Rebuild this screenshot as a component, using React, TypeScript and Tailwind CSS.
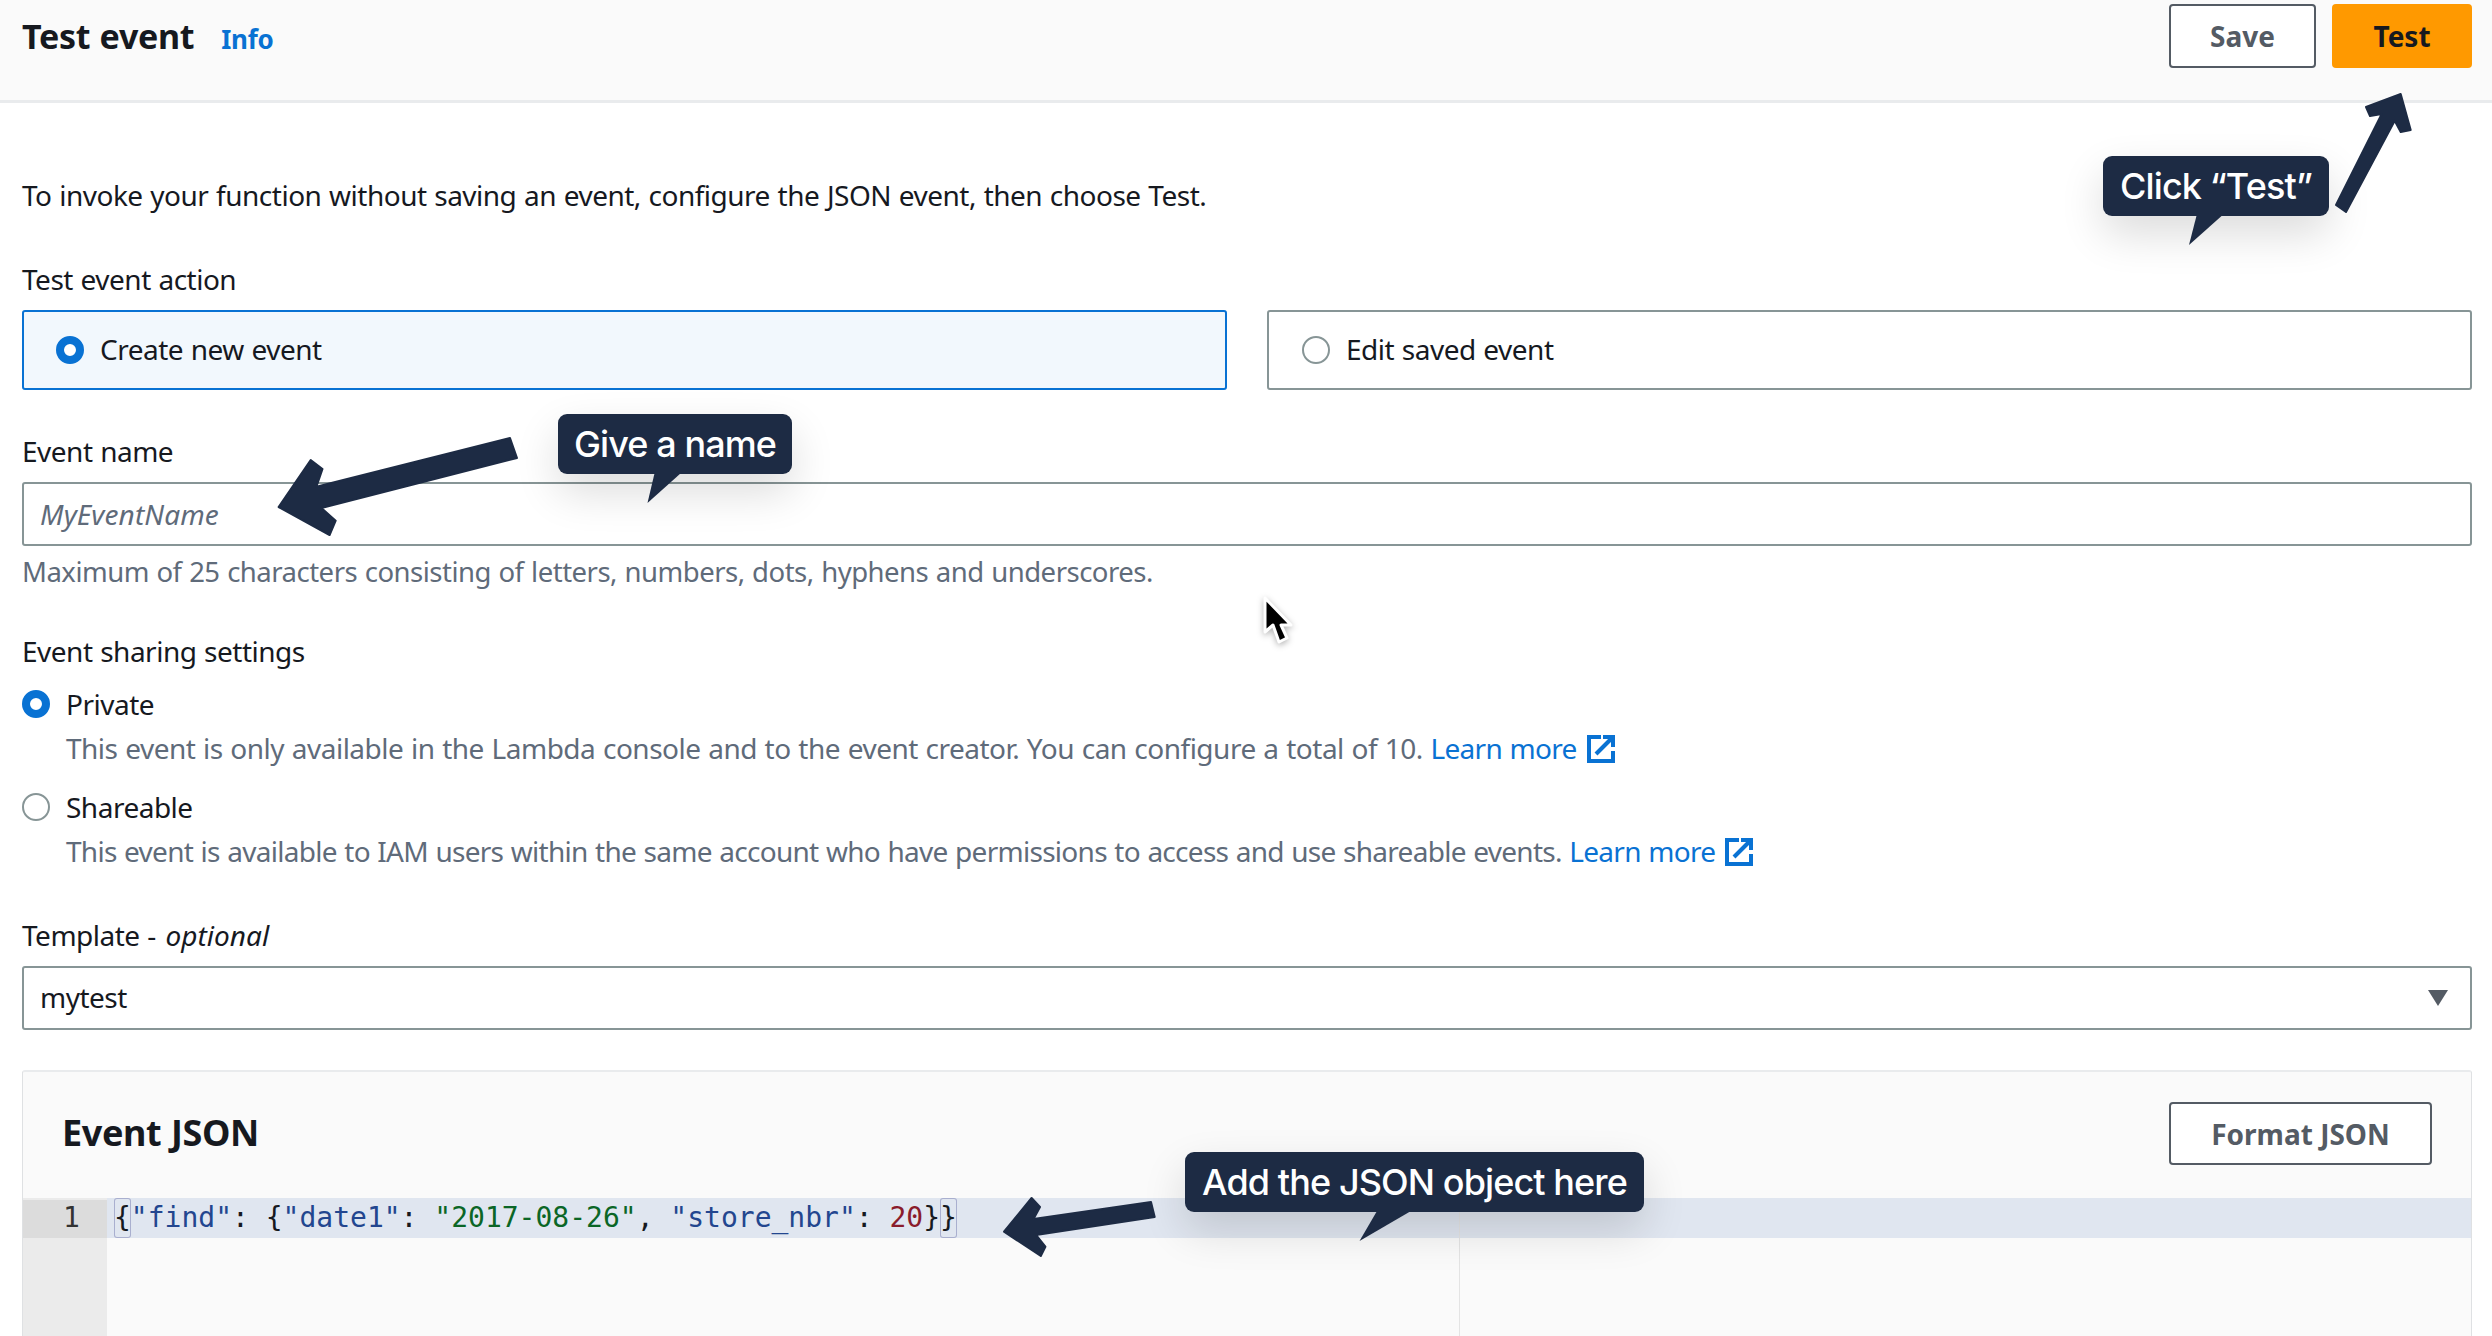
const Arrow = ({ points }: { points: string }) => (
  <svg className="absolute top-0 left-0 pointer-events-none" width="2492" height="1336">
    <polygon points={points} fill="#1d2b44" stroke="#1d2b44" strokeWidth="2" strokeLinejoin="round" />
  </svg>
);

const Callout = ({ label, className, tail }: { label: string; className: string; tail: string }) => (
  <>
    <div className={`absolute h-[60px] flex items-center justify-center rounded-[9px] bg-[#1d2b44] text-white font-['Inter',sans-serif] font-medium text-[36px] tracking-[-0.9px] [word-spacing:0px] whitespace-nowrap shadow-[0_18px_44px_rgba(0,0,0,0.14)] ${className}`}>
      {label}
    </div>
    <svg className="absolute top-0 left-0 pointer-events-none" width="2492" height="1336">
      <polygon points={tail} fill="#1d2b44" />
    </svg>
  </>
);

const Radio = ({ checked }: { checked: boolean }) =>
  checked ? (
    <span className="block w-[28px] h-[28px] rounded-full border-[8px] border-[#0972d3] bg-white shrink-0" />
  ) : (
    <span className="block w-[28px] h-[28px] rounded-full border-2 border-[#879596] bg-white shrink-0" />
  );

const ExternalIcon = () => (
  <svg className="inline-block ml-[10px] align-[-4px]" width="28" height="28" viewBox="0 0 28 28" fill="none" stroke="#0972d3" strokeWidth="4">
    <path d="M14 2H2v24h24V16" />
    <path d="M16 2h10v10" />
    <path d="M9 19 25 3" />
  </svg>
);

const LearnMore = () => (
  <span className="text-[#0972d3] tracking-[-0.7px]">
    Learn more
    <ExternalIcon />
  </span>
);

export default function App() {
  return (
    <div className="relative w-[2492px] h-[1336px] overflow-hidden bg-white font-['Noto_Sans',sans-serif] text-[28px] leading-[40px] tracking-[-0.5px] [word-spacing:0.9px] text-[#16191f]">
      <header className="h-[103px] bg-[#fafafa] border-b-[3px] border-[#e9ebed] flex justify-between pl-[22px] pr-[20px]">
        <div className="flex items-baseline pt-[12px]">
          <h1 className="text-[34px] leading-[48px] font-bold tracking-[-0.3px]">Test event</h1>
          <a className="ml-[27px] text-[26px] font-bold text-[#0972d3] tracking-[-0.3px]">Info</a>
        </div>
        <div className="flex gap-[16px] pt-[4px]">
          <button className="w-[147px] h-[64px] bg-white border-2 border-[#545b64] rounded-[4px] text-[#545b64] font-bold text-[28px] tracking-normal">Save</button>
          <button className="w-[140px] h-[64px] bg-[#ff9900] rounded-[4px] text-[#16191f] font-bold text-[28px] tracking-normal">Test</button>
        </div>
      </header>

      <main className="pl-[22px] pr-[20px]">
        <p className="mt-[72px]">To invoke your function without saving an event, configure the JSON event, then choose Test.</p>

        <div className="mt-[44px]">Test event action</div>
        <div className="mt-[11px] grid grid-cols-2 gap-[40px]">
          <div className="h-[80px] flex items-center gap-[16px] pl-[32px] border-2 border-[#0972d3] rounded-[3px] bg-[#f2f8fd]">
            <Radio checked />
            <span className="mb-[2px]">Create new event</span>
          </div>
          <div className="h-[80px] flex items-center gap-[16px] pl-[33px] border-2 border-[#879596] rounded-[3px]">
            <Radio checked={false} />
            <span className="mb-[2px]">Edit saved event</span>
          </div>
        </div>

        <div className="mt-[41px]">Event name</div>
        <div className="mt-[11px] h-[64px] flex items-center pl-[16px] border-2 border-[#879596] rounded-[3px] italic text-[#5f6b7a] tracking-[0.1px]">MyEventName</div>
        <div className="mt-[6px] text-[27.5px] text-[#5f6b7a]">Maximum of 25 characters consisting of letters, numbers, dots, hyphens and underscores.</div>

        <div className="mt-[39px]">Event sharing settings</div>
        <div className="mt-[13px] flex items-center gap-[16px]">
          <Radio checked />
          <span>Private</span>
        </div>
        <div className="mt-[4px] pl-[44px] text-[#5f6b7a]">
          This event is only available in the Lambda console and to the event creator. You can configure a total of 10. <LearnMore />
        </div>
        <div className="mt-[19px] flex items-center gap-[16px]">
          <Radio checked={false} />
          <span>Shareable</span>
        </div>
        <div className="mt-[4px] pl-[44px] text-[#5f6b7a] tracking-[-0.72px]">
          This event is available to IAM users within the same account who have permissions to access and use shareable events. <LearnMore />
        </div>

        <div className="mt-[44px]">
          Template - <em className="ml-[2px] tracking-normal">optional</em>
        </div>
        <div className="mt-[11px] h-[64px] flex items-center justify-between pl-[16px] pr-[22px] border-2 border-[#879596] rounded-[3px]">
          <span className="mb-[2px]">mytest</span>
          <svg width="20" height="16" viewBox="0 0 20 16">
            <polygon points="0,0 20,0 10,16" fill="#545b64" />
          </svg>
        </div>

        <section className="mt-[40px] h-[300px] flex flex-col bg-[#fafafa] border-t-2 border-t-[#e9ebed] border-x border-x-[#dfe1e3] rounded-t-[3px]">
          <div className="h-[126px] flex items-start justify-between pl-[39px] pr-[39px] pt-[30px] shrink-0">
            <h2 className="mt-[11px] text-[36px] leading-[40px] font-bold tracking-[-0.4px]">Event JSON</h2>
            <button className="w-[263px] h-[63px] bg-white border-2 border-[#545b64] rounded-[4px] text-[#545b64] font-bold text-[28px] tracking-normal">Format JSON</button>
          </div>
          <div className="relative flex-1 flex font-['DejaVu_Sans_Mono',monospace] text-[28px] leading-[40px] tracking-normal [word-spacing:0px]">
            <div className="w-[84px] bg-[#ebebeb] shrink-0">
              <div className="h-[38px] mt-[2px] bg-[#dcdcdc] pl-[40px] text-[#333333] leading-[36px]">1</div>
            </div>
            <div className="flex-1 min-w-0">
              <div className="h-[40px] bg-[#e0e6f0] pl-[7px] whitespace-pre">
                <span className="inline-block h-[40px] rounded-[3px] shadow-[inset_0_0_0_1px_#a9afcf]">{'{'}</span>
                <span className="text-[#23468f]">"find"</span>
                <span>: {'{'}</span>
                <span className="text-[#23468f]">"date1"</span>
                <span>: </span>
                <span className="text-[#0b6626]">"2017-08-26"</span>
                <span>, </span>
                <span className="text-[#23468f]">"store_nbr"</span>
                <span>: </span>
                <span className="text-[#8a1c2c]">20</span>
                <span>{'}'}</span>
                <span className="inline-block h-[40px] rounded-[3px] shadow-[inset_0_0_0_1px_#a9afcf]">{'}'}</span>
              </div>
            </div>
            <div className="absolute top-0 bottom-0 left-[1436px] w-px bg-[#e4e4e4]" />
          </div>
        </section>
      </main>

      <Callout label="Click “Test”" className="left-[2103px] top-[156px] w-[226px]" tail="2196.7,215 2222.7,215 2189,245" />
      <Callout label="Give a name" className="left-[558px] top-[414px] w-[234px]" tail="654.6,473 681,473 647.5,503" />
      <Callout label="Add the JSON object here" className="left-[1185px] top-[1152px] w-[459px]" tail="1377,1211 1411,1211 1359.5,1241" />

      <Arrow points="2336,205 2381.7,114 2370,116 2366,107 2400.7,94 2410.7,130 2400.7,132 2394.7,120.7 2346,212" />
      <Arrow points="510,438 517,458 321.4,508 335.7,520.7 329.6,535 278.6,507 310.7,460 322.5,469 316.4,486.7" />
      <Arrow points="1151,1202 1154.7,1217 1036,1235 1045.4,1246.7 1040.8,1256 1004,1231.7 1031.6,1198 1040,1207 1033.5,1219" />

      <svg className="absolute left-[1260px] top-[592px] pointer-events-none drop-shadow-[0_2px_3px_rgba(0,0,0,0.3)]" width="40" height="60" viewBox="0 0 40 60">
        <path d="M5 6v34l8-7 6 17 8-4-6-13h10z" fill="#000" stroke="#fff" strokeWidth="3" strokeLinejoin="round" />
      </svg>
    </div>
  );
}
